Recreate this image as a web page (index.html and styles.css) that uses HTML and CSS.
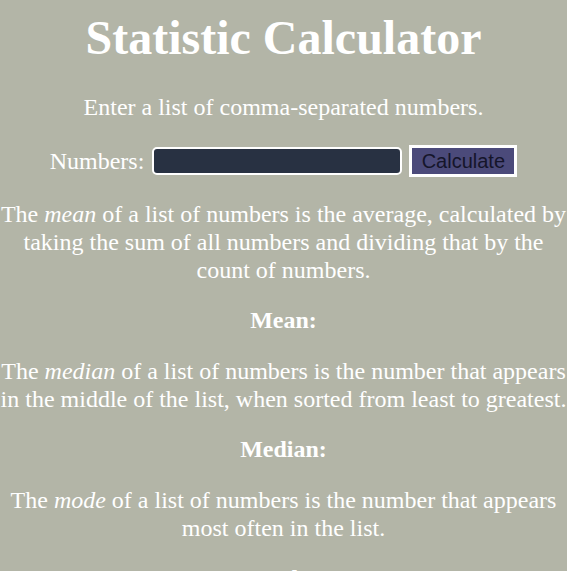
FILE: index.html
```html
<!DOCTYPE html>
<html>
<head>
<meta charset="utf-8">
<title>Statistic Calculator</title>
<link rel="stylesheet" href="styles.css">
</head>
<body>
<h1 class="title">Statistic Calculator</h1>
<p class="intro">Enter a list of comma-separated numbers.</p>
<div class="form-row">
  <label class="label" for="numbers">Numbers:</label>
  <input class="numbers-input" id="numbers" type="text">
  <button class="calc-btn" type="button">Calculate</button>
</div>
<p class="desc">The <em>mean</em> of a list of numbers is the average, calculated by taking the sum of all numbers and dividing that by the count of numbers.</p>
<p class="result">Mean:</p>
<p class="desc">The <em>median</em> of a list of numbers is the number that appears in the middle of the list, when sorted from least to greatest.</p>
<p class="result">Median:</p>
<p class="desc">The <em>mode</em> of a list of numbers is the number that appears most often in the list.</p>
<p class="result">Mode:</p>
</body>
</html>
```
FILE: styles.css
```css
html, body {
  background: #b3b5a7;
}
body {
  margin: 0;
  color: #ffffff;
  font-family: "Liberation Serif", "Times New Roman", serif;
  font-size: 24px;
  text-align: center;
}
.title {
  font-size: 48px;
  font-weight: bold;
  margin: 10px 0 0;
  line-height: 55px;
}
.intro {
  margin: 28px 0 0;
  line-height: 28px;
}
.form-row {
  display: flex;
  justify-content: center;
  align-items: center;
  margin-top: 24px;
  height: 32px;
}
.label {
  margin-right: 9px;
}
.numbers-input {
  width: 250px;
  height: 28px;
  box-sizing: border-box;
  background: #283142;
  border: 2px solid #ffffff;
  border-radius: 5px;
  margin: 0 0 0 -1px;
}
.calc-btn {
  width: 108px;
  height: 32px;
  margin-left: 7px;
  box-sizing: border-box;
  background: #4b4a7a;
  border: 3px solid #ffffff;
  border-radius: 0;
  font-family: "Liberation Sans", Arial, sans-serif;
  font-size: 20px;
  color: #15152a;
  padding: 0;
}
.desc {
  margin: 23px 0 22px;
  line-height: 28px;
}
.result {
  font-weight: bold;
  margin: 22px 0 20px;
  line-height: 28px;
}
```
